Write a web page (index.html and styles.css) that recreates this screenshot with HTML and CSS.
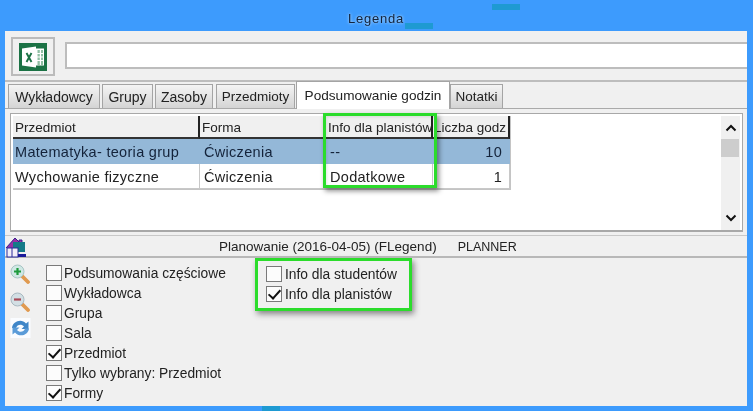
FILE: index.html
```html
<!DOCTYPE html>
<html lang="pl">
<head>
<meta charset="utf-8">
<title>Legenda</title>
<link rel="stylesheet" href="styles.css">
</head>
<body>
<div class="screen">
  <div class="titlebar"><span class="title">Legenda</span></div>
  <span class="glitch glitch-a"></span>
  <span class="glitch glitch-b"></span>
  <span class="glitch glitch-c"></span>
  <main class="window">
    <div class="toolbar">
      <button class="excel-btn" aria-label="Excel">
        <svg width="30" height="30" viewBox="0 0 30 30">
          <rect x="1" y="1" width="28" height="28" fill="#1b7245"/>
          <path d="M4 6.500 18 4.500V25.500L4 23.500Z" fill="#fff"/>
          <path d="M18 6.500H26V23.500H18Z" fill="#fff"/>
          <path d="M19.500 8H21.800V23H19.500ZM23 8H25V23H23Z" fill="#8fbfa3"/>
          <path d="M19 11.500H26M19 15H26M19 18.500H26" stroke="#fff" stroke-width="1"/>
          <path d="M8.500 11 13.500 20M13.500 11 8.500 20" stroke="#1b7245" stroke-width="1.900" fill="none"/>
        </svg>
      </button>
      <div class="path-input"></div>
    </div>
    <div class="tabs">
      <div class="tab tab-1">Wykładowcy</div>
      <div class="tab tab-2">Grupy</div>
      <div class="tab tab-3">Zasoby</div>
      <div class="tab tab-4">Przedmioty</div>
      <div class="tab tab-active">Podsumowanie godzin</div>
      <div class="tab tab-6">Notatki</div>
    </div>
    <section class="table-panel">
      <div class="grid">
        <div class="th">Przedmiot</div>
        <div class="th">Forma</div>
        <div class="th">Info dla planistów</div>
        <div class="th th-last">Liczba godz</div>
        <div class="td first sel">Matematyka- teoria grup</div>
        <div class="td sel">Ćwiczenia</div>
        <div class="td sel">--</div>
        <div class="td sel num">10</div>
        <div class="td first">Wychowanie fizyczne</div>
        <div class="td">Ćwiczenia</div>
        <div class="td">Dodatkowe</div>
        <div class="td num">1</div>
      </div>
      <div class="scrollbar">
        <svg class="chev" width="12" height="8" viewBox="0 0 12 8"><path d="M1.500 6.500 6 2l4.500 4.500" fill="none" stroke="#111" stroke-width="2"/></svg>
        <div class="thumb"></div>
        <svg class="chev" width="12" height="8" viewBox="0 0 12 8"><path d="M1.500 1.500 6 6l4.500-4.500" fill="none" stroke="#111" stroke-width="2"/></svg>
      </div>
      <div class="hl hl-col"></div>
    </section>
    <div class="status">
      <svg class="home" width="22" height="21" viewBox="0 0 22 21">
        <path d="M1 11 10 1l4 4V3h3v5l3 3" fill="#9a2fa6" stroke="#35208c" stroke-width="1"/>
        <rect x="8" y="5" width="12" height="10" fill="#157a88"/>
        <rect x="2" y="11" width="11" height="9" fill="#f2eef8" stroke="#2a2a9a"/>
        <path d="M7 11v9" stroke="#2a2a9a"/>
        <path d="M13 17h8v3h-8z" fill="#1a1a9a"/>
      </svg>
      <span class="status-text">Planowanie (2016-04-05) (FLegend)</span>
      <span class="status-user">PLANNER</span>
    </div>
    <div class="options">
      <div class="side-icons">
        <svg width="21" height="20" viewBox="0 0 21 20">
          <path d="M11.500 11.500 18 18" stroke="#e09a50" stroke-width="3.800" stroke-linecap="round"/>
          <circle cx="7.500" cy="7.500" r="6.500" fill="#cfe8e4" stroke="#a8c4c4"/>
          <path d="M4 7.500h7M7.500 4v7" stroke="#1d9a3c" stroke-width="2.200"/>
        </svg>
        <svg width="21" height="20" viewBox="0 0 21 20">
          <path d="M11.500 11.500 18 18" stroke="#e09a50" stroke-width="3.800" stroke-linecap="round"/>
          <circle cx="7.500" cy="7.500" r="6.500" fill="#d3dfe4" stroke="#a8b8c0"/>
          <path d="M4 7.500h7" stroke="#a84a58" stroke-width="2.200"/>
        </svg>
        <svg class="refresh" width="21" height="20" viewBox="0 0 20 20">
          <rect width="20" height="20" fill="#fafcff"/>
          <path d="M1.500 10C2 3.500 11 0 15.500 5.500L18 3.500V11h-7l2.500-2.500C11 5.500 6.500 6.500 5.500 10Z" fill="#3f86c8"/>
          <path d="M18.500 10.500C18 17 9 20 4.500 14.500L2 16.500V9.500h7l-2.500 2.500C9 15 13.500 14 14.500 10.500Z" fill="#5a9bd8"/>
        </svg>
      </div>
      <div class="checks checks-main">
        <label class="check"><span class="box"></span>Podsumowania częściowe</label>
        <label class="check"><span class="box"></span>Wykładowca</label>
        <label class="check"><span class="box"></span>Grupa</label>
        <label class="check"><span class="box"></span>Sala</label>
        <label class="check"><span class="box on"></span>Przedmiot</label>
        <label class="check"><span class="box"></span>Tylko wybrany: Przedmiot</label>
        <label class="check"><span class="box on"></span>Formy</label>
      </div>
      <div class="checks hl-group">
        <label class="check"><span class="box"></span>Info dla studentów</label>
        <label class="check"><span class="box on"></span>Info dla planistów</label>
      </div>
    </div>
  </main>
</div>
</body>
</html>
```
FILE: styles.css
```css
* { box-sizing: border-box; }
html, body { margin: 0; height: 100%; }
body {
  background: #3d9bfd;
  font-family: "Liberation Sans", Arial, sans-serif;
  font-size: 13.8px;
  color: #222;
  overflow: hidden;
}
.screen { position: relative; width: 753px; height: 411px; overflow: hidden; padding: 0 6px 0 5px; filter: blur(.35px); }
.titlebar { height: 31px; display: flex; justify-content: center; padding: 11px 0 0 0; }
.title { color: #12233c; font-size: 13px; line-height: 16px; letter-spacing: .8px; text-shadow: 0 0 3px #d8ecff; }
.glitch { position: absolute; width: 28px; height: 6px; background: #1e9ad2; }
.glitch-a { left: 492px; top: 4px; }
.glitch-b { left: 405px; top: 23px; }
.glitch-c { left: 262px; top: 406px; width: 18px; height: 5px; }

.window { background: #f0f0f0; height: 375px; display: flex; flex-direction: column; }

.toolbar { height: 51px; flex: none; display: flex; align-items: flex-start; padding: 6px 0 0 6px; border-bottom: 2px solid #bdbdbd; }
.excel-btn { width: 44px; height: 39px; padding: 0; display: flex; align-items: center; justify-content: center; background: #f0f0f0; border: 2px solid #bbb; }
.path-input { flex: 1; height: 27px; margin: 5px 0 0 10px; background: #fff; border: 2px solid #bdbdbd; border-right: 0; }

.tabs { height: 27px; flex: none; display: flex; align-items: flex-end; padding-left: 3px; border-bottom: 1px solid #aaa; }
.tab { height: 24px; line-height: 24px; text-align: center; color: #222; background: linear-gradient(#f4f4f4, #d4d4d4); border: 1px solid #a4a4a4; border-bottom: 0; white-space: nowrap; font-size: 14px; }
.tab-1 { width: 92px; margin-right: 2px; }
.tab-2 { width: 51px; margin-right: 2px; }
.tab-3 { width: 58px; margin-right: 3px; }
.tab-4 { width: 79px; margin-right: 1px; font-size: 13.500px; }
.tab-active { width: 154px; height: 28px; line-height: 27px; background: #fff; margin-bottom: -1px; font-size: 13.600px; }
.tab-6 { width: 53px; font-size: 13.500px; }

.table-panel { position: relative; flex: none; height: 119px; margin: 4px 4px 0 5px; padding: 2px 2px 0 2px; background: #fff; border: 1px solid #a8a8a8; border-bottom-width: 2px; display: flex; justify-content: space-between; }
.grid { display: grid; grid-template-columns: 187px 126px 107px 77px; grid-template-rows: 23px 25px 25px; align-self: flex-start; border-bottom: 1px solid #c4c4c4; border-right: 1px solid #c4c4c4; }
.th { background: #f0f0f0; font-size: 13.500px; line-height: 24px; padding-left: 2px; border-right: 2px solid #222; border-bottom: 2px solid #333; white-space: nowrap; overflow: hidden; }
.th-last { padding-left: 1px; }
.td { font-size: 14.500px; line-height: 24px; padding: 1px 3px 0 4px; border-right: 1px solid #c8c8c8; border-bottom: 1px solid #c8c8c8; letter-spacing: .3px; }
.first { padding-left: 2px; }
.sel { background: #94b8d8; color: #14233a; border-color: #94b8d8; }
.num { text-align: right; padding-right: 7px; }
.scrollbar { width: 19px; background: #f0f0f0; display: flex; flex-direction: column; align-items: center; padding-top: 8px; }
.thumb { width: 18px; height: 18px; margin: 7px 0 57px; background: #cdcdcd; flex: none; align-self: flex-start; }
.chev { flex: none; }

.hl { position: absolute; }
.hl-col { left: 312px; top: -1px; width: 114px; height: 75px; border: 3px solid #2bdc2b; box-shadow: 2px 3px 5px rgba(0,0,0,.45), inset 1px 1px 3px rgba(0,0,0,.1); }

.status { position: relative; flex: none; height: 23px; margin-top: 3px; padding: 2px 0 0 214px; border-top: 1px solid #c8c8c8; border-bottom: 2px solid #b8b8b8; display: flex; align-items: baseline; line-height: 18px; font-size: 13.500px; }
.home { position: absolute; left: 0; top: 1px; }
.status-user { margin-left: 21px; font-size: 12.500px; }

.options { flex: 1; display: flex; align-items: flex-start; padding-left: 5px; }
.side-icons { width: 36px; flex: none; display: flex; flex-direction: column; gap: 8px; padding-top: 6px; }
.refresh { margin-top: -2px; }
.checks { display: flex; flex-direction: column; padding-top: 5px; }
.checks-main { width: 182px; }
.check { height: 20px; display: flex; align-items: center; gap: 2px; white-space: nowrap; }
.box { width: 16px; height: 16px; flex: none; background: #fcfcfc; border: 1px solid #7a7a7a; position: relative; }
.box.on::after { content: ""; position: absolute; left: 4px; top: 0; width: 5px; height: 10px; border: solid #111; border-width: 0 2.500px 2.500px 0; transform: rotate(42deg); }
.hl-group { margin-left: 27px; width: 157px; height: 53px; padding: 3px 0 0 8px; border: 3px solid #2bdc2b; box-shadow: 2px 3px 6px rgba(0,0,0,.45); }
.hl-group .check { gap: 3px; }
```
